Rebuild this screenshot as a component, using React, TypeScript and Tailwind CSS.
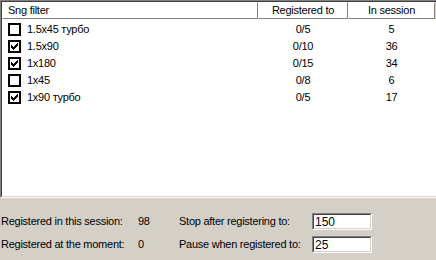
const rows = [
  { name: "1.5x45 турбо", checked: false, reg: "0/5", session: "5" },
  { name: "1.5x90", checked: true, reg: "0/10", session: "36" },
  { name: "1x180", checked: true, reg: "0/15", session: "34" },
  { name: "1x45", checked: false, reg: "0/8", session: "6" },
  { name: "1x90 турбо", checked: true, reg: "0/5", session: "17" },
];

// classic 7x7 check glyph
const tick = [
  [6, 0], [5, 1], [6, 1], [0, 2], [4, 2], [5, 2], [6, 2],
  [0, 3], [1, 3], [3, 3], [4, 3], [5, 3],
  [0, 4], [1, 4], [2, 4], [3, 4], [4, 4],
  [1, 5], [2, 5], [3, 5], [2, 6],
];

function Checkbox({ checked }: { checked: boolean }) {
  return (
    <div className="w-[13px] h-[13px] border-2 border-black bg-white shrink-0 flex items-center justify-center">
      {checked && (
        <svg width="7" height="7" viewBox="0 0 7 7" shapeRendering="crispEdges">
          {tick.map(([x, y], i) => (
            <rect key={i} x={x} y={y} width="1" height="1" fill="#000" />
          ))}
        </svg>
      )}
    </div>
  );
}

function HeaderCell({ children, className }: { children: React.ReactNode; className: string }) {
  return (
    <div
      className={`h-[17px] flex items-center border-t border-l border-t-white border-l-white border-r border-b border-r-[#808080] border-b-[#808080] ${className}`}
    >
      {children}
    </div>
  );
}

function Field({ value }: { value: string }) {
  return (
    <div className="w-[60px] h-[17px] border-t border-l border-t-[#808080] border-l-[#808080] border-r border-b border-r-white border-b-white">
      <div className="h-full bg-white border-t border-l border-t-[#404040] border-l-[#404040] border-r border-b border-r-[#d4d0c8] border-b-[#d4d0c8] flex items-center pl-[1px] text-[12px] tracking-normal">
        {value}
      </div>
    </div>
  );
}

export default function App() {
  return (
    <div
      className="w-[436px] h-[260px] bg-[#d4d0c8] text-black text-[11px] leading-none tracking-[-0.25px] overflow-hidden"
      style={{ fontFamily: '"Liberation Sans", Arial, sans-serif' }}
    >
      <div className="h-[198px] border-t border-l border-t-[#808080] border-l-[#808080] border-b border-b-white">
        <div className="h-full bg-white border-t border-l border-t-[#404040] border-l-[#404040] border-b border-b-[#d4d0c8]">
          <div className="flex">
            <HeaderCell className="w-[256px] pl-[5px]">Sng filter</HeaderCell>
            <HeaderCell className="w-[90px] justify-center">Registered to</HeaderCell>
            <HeaderCell className="w-[87px] justify-center">In session</HeaderCell>
            <div className="flex-1 h-[17px] bg-[#d4d0c8]" />
          </div>
          <div className="pt-[2px]">
            {rows.map((r) => (
              <div key={r.name} className="flex h-[17px] items-center">
                <div className="w-[256px] flex items-center gap-[6px] pl-[6px]">
                  <Checkbox checked={r.checked} />
                  <span>{r.name}</span>
                </div>
                <div className="w-[90px] text-center">{r.reg}</div>
                <div className="w-[87px] text-center">{r.session}</div>
              </div>
            ))}
          </div>
        </div>
      </div>
      <div className="pt-[15px] flex flex-col gap-[6px]">
        <div className="flex h-[17px] items-center">
          <div className="w-[138px] pl-[1px]">Registered in this session:</div>
          <div className="w-[41px]">98</div>
          <div className="w-[133px]">Stop after registering to:</div>
          <Field value="150" />
        </div>
        <div className="flex h-[17px] items-center">
          <div className="w-[138px] pl-[1px]">Registered at the moment:</div>
          <div className="w-[41px]">0</div>
          <div className="w-[133px]">Pause when registered to:</div>
          <Field value="25" />
        </div>
      </div>
    </div>
  );
}
